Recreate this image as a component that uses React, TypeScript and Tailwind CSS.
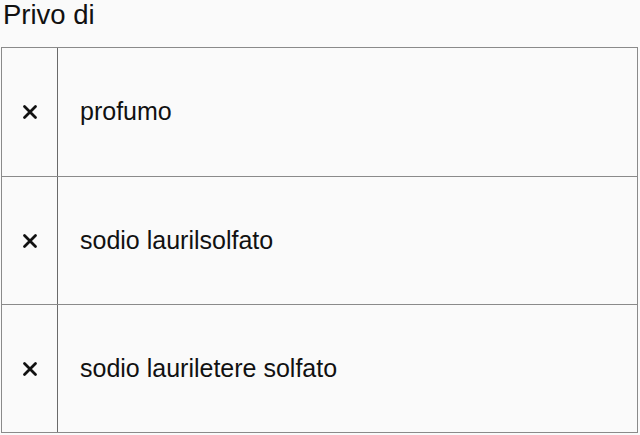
import React from "react";

export default function App() {
  const rows = ["profumo", "sodio laurilsolfato", "sodio lauriletere solfato"];
  return (
    <div className="w-[640px] h-[435px] bg-[#fafafa] overflow-hidden" style={{ fontFamily: '"Liberation Sans", Arial, sans-serif' }}>
      <div className="pl-[3px] h-[47px] text-[27.5px] leading-[30px] text-[#111]">Privo di</div>
      <div className="ml-[1px] w-[637px] border border-[#8a8a8a]">
        {rows.map((r, i) => (
          <div key={i} className={`flex h-[128px] ${i > 0 ? "border-t border-[#8a8a8a]" : ""}`}>
            <div className="w-[56px] border-r border-[#6a6a6a] flex items-center justify-center">
              <svg width="16" height="16" viewBox="0 0 16 16">
                <path d="M2.5 2.5 L13.5 13.5 M13.5 2.5 L2.5 13.5" stroke="#111" strokeWidth="2.8" strokeLinecap="round" />
              </svg>
            </div>
            <div className="flex-1 flex items-center pl-[22px] text-[25px] text-[#111]">{r}</div>
          </div>
        ))}
      </div>
    </div>
  );
}
